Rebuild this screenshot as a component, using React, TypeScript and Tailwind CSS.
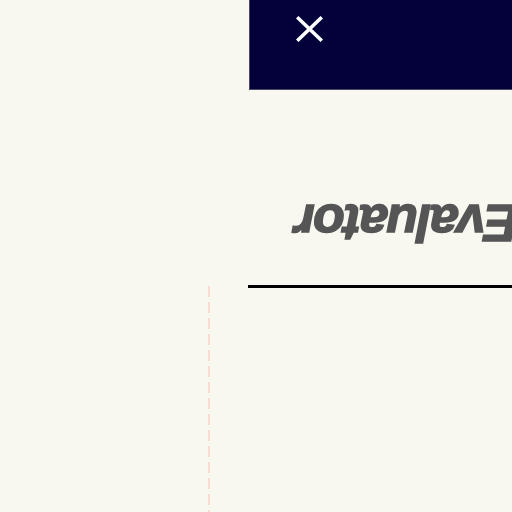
export default function App() {
  return (
    <div className="flex h-[512px] w-[512px] overflow-hidden bg-[#f8f7f0]" style={{ fontFamily: '"Liberation Sans", Arial, sans-serif' }}>
      {/* left gutter with the dashed guide */}
      <div className="flex w-[248px] shrink-0 flex-col pt-[286px]">
        <div className="ml-[208px] h-full w-[2px] bg-[repeating-linear-gradient(to_bottom,#fbdcd3_0px,#fbdcd3_11px,transparent_11px,transparent_16px)]" />
      </div>

      <div className="flex min-w-0 flex-1 flex-col">
        <div className="ml-px flex h-[90px] items-start border-b border-l border-[#4a4866] bg-[#03003a] pl-[46px] pt-[16px]">
          <svg width="27" height="26" viewBox="0 0 27 26" fill="none" stroke="#ffffff" strokeWidth="3.6" strokeLinecap="square">
            <path d="M2.5 2.5 L24.5 23.5 M24.5 2.5 L2.5 23.5" />
          </svg>
        </div>

        <div className="mt-[107px] overflow-hidden whitespace-nowrap pl-[48px]">
          <div className="inline-block rotate-180 text-[52px] font-bold italic leading-none tracking-[-1.6px] text-[#555555] [-webkit-text-stroke:1.5px_#555555]">
            Evaluator
          </div>
        </div>

        <div className="mt-[36px] h-[3px] bg-black" />
      </div>
    </div>
  );
}
